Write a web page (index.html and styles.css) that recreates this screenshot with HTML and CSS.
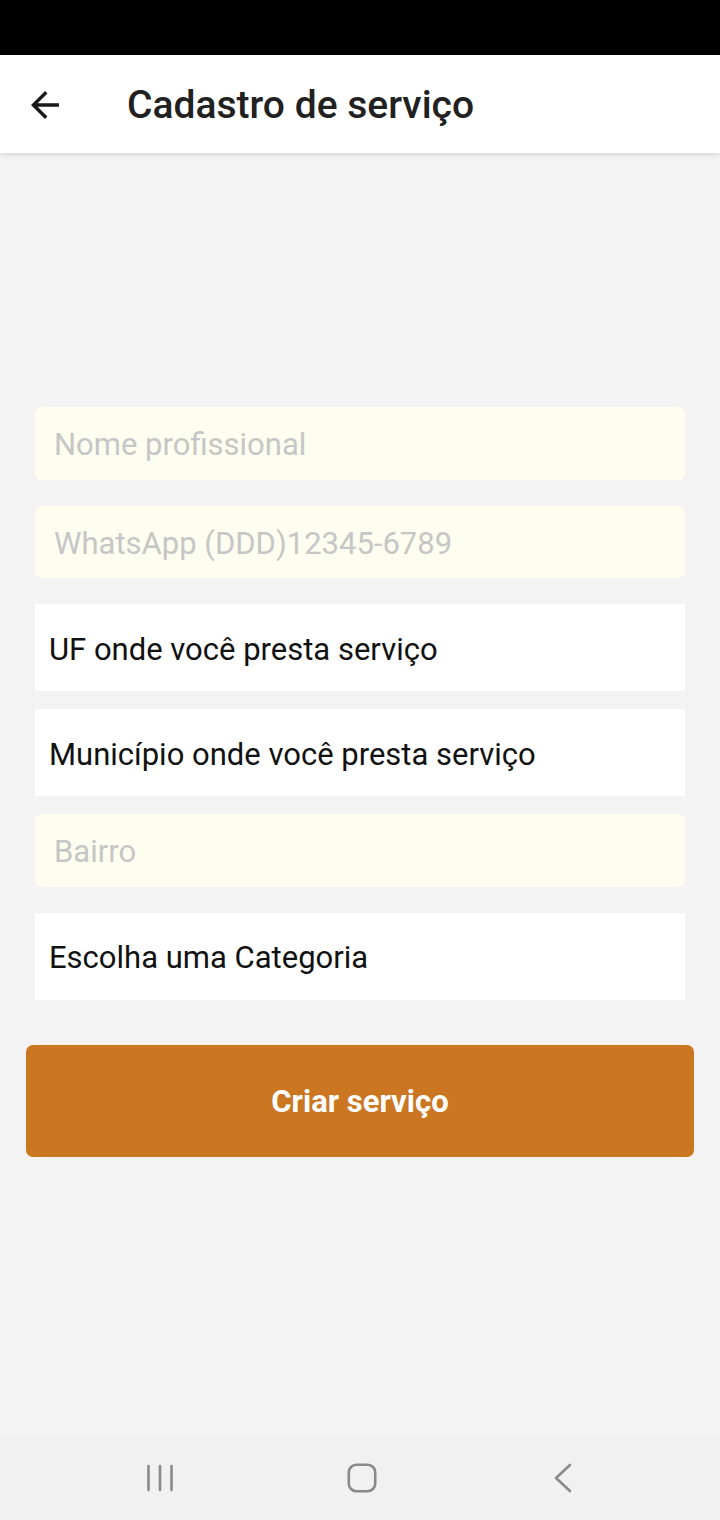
FILE: index.html
```html
<!DOCTYPE html>
<html lang="pt-BR">
<head>
<meta charset="utf-8">
<title>Cadastro de serviço</title>
<link rel="stylesheet" href="styles.css">
</head>
<body>
<div class="screen">
  <div class="status-bar"></div>
  <header class="app-bar">
    <button class="back" aria-label="Voltar">
      <svg width="42" height="42" viewBox="0 0 24 24"><path d="M20 11H7.83l5.59-5.59L12 4l-8 8 8 8 1.41-1.41L7.83 13H20v-2z" fill="#1a1a1a"/></svg>
    </button>
    <h1 class="title">Cadastro de serviço</h1>
  </header>
  <main class="content">
    <form class="form">
      <div class="field input gap-l">Nome profissional</div>
      <div class="field input gap-l">WhatsApp (DDD)12345-6789</div>
      <div class="field select gap-s">UF onde você presta serviço</div>
      <div class="field select gap-s">Município onde você presta serviço</div>
      <div class="field input gap-l">Bairro</div>
      <div class="field select">Escolha uma Categoria</div>
      <button type="button" class="submit">Criar serviço</button>
    </form>
  </main>
  <nav class="nav-bar">
    <svg class="nav-icon recents" width="28" height="30" viewBox="0 0 28 30"><g stroke="#8a8a8a" stroke-width="2.6" stroke-linecap="round"><line x1="2.5" y1="3" x2="2.5" y2="27"/><line x1="14" y1="3" x2="14" y2="27"/><line x1="25.5" y1="3" x2="25.5" y2="27"/></g></svg>
    <svg class="nav-icon home" width="30" height="30" viewBox="0 0 30 30"><rect x="1.8" y="1.8" width="26.4" height="26.4" rx="7.5" fill="none" stroke="#8a8a8a" stroke-width="2.6"/></svg>
    <svg class="nav-icon backnav" width="22" height="30" viewBox="0 0 22 30"><polyline points="19,2 5,15 19,28" fill="none" stroke="#8a8a8a" stroke-width="2.6" stroke-linecap="round" stroke-linejoin="round"/></svg>
  </nav>
</div>
</body>
</html>
```
FILE: styles.css
```css
* { box-sizing: border-box; }
html, body { margin: 0; padding: 0; }
body {
  width: 720px;
  height: 1520px;
  background: #f3f3f3;
  font-family: Roboto, "Liberation Sans", sans-serif;
  overflow: hidden;
}
.screen {
  display: flex;
  flex-direction: column;
  height: 1520px;
}
.status-bar {
  height: 55px;
  background: #000;
  flex: none;
}
.app-bar {
  height: 98px;
  flex: none;
  background: #fff;
  display: flex;
  align-items: center;
  padding-left: 24px;
  padding-top: 2px;
  box-shadow: 0 2px 4px rgba(0,0,0,0.12);
  position: relative;
  z-index: 1;
}
.back {
  border: 0;
  background: none;
  padding: 0;
  width: 42px;
  height: 42px;
  display: flex;
}
.title {
  margin: 0 0 0 61px;
  font-size: 39px;
  font-weight: 500;
  color: #212121;
  letter-spacing: 0;
}
.content {
  flex: 1;
  padding: 254px 26px 0;
}
.form {
  display: flex;
  flex-direction: column;
}
.field {
  margin: 0 9px;
  display: flex;
  align-items: center;
  font-size: 31px;
  padding-top: 3px;
}
.input {
  height: 72.5px;
  background: #fdfef0;
  border-radius: 7px;
  padding-left: 19px;
  color: #c6c6c6;
}
.select {
  height: 87px;
  background: #fff;
  padding-left: 14px;
  color: #111;
}
.gap-l { margin-bottom: 26px; }
.gap-s { margin-bottom: 18px; }
.submit {
  margin-top: 45px;
  height: 112px;
  border: 0;
  border-radius: 7px;
  background: #cb7722;
  color: #fff;
  font-family: Roboto, "Liberation Sans", sans-serif;
  font-weight: 700;
  font-size: 31px;
  padding-top: 3px;
}
.nav-bar {
  height: 84px;
  flex: none;
  background: #f1f1f1;
  display: flex;
  align-items: center;
  padding-left: 146px;
}
.nav-icon { display: block; }
.recents { margin-right: 173px; }
.home { margin-right: 174px; }
```
